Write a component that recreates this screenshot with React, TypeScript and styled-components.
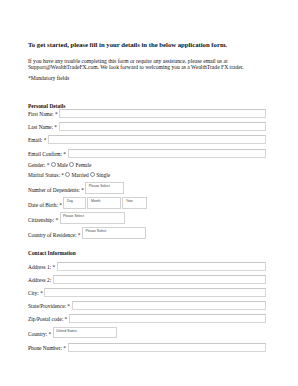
import React from 'react';
import styled, { createGlobalStyle } from 'styled-components';

const GlobalStyle = createGlobalStyle`
  html, body {
    margin: 0;
    padding: 0;
    background: #ffffff;
  }
  body {
    font-family: "Liberation Serif", "Times New Roman", serif;
    color: #111;
  }
`;

const Page = styled.div`
  width: 298px;
  height: 386px;
  padding: 41px 0 0 28px;
  box-sizing: border-box;
  overflow: hidden;
`;

const Title = styled.h1`
  margin: 0;
  font-size: 6.7px;
  line-height: 8px;
  font-weight: bold;
  white-space: nowrap;
`;

const Intro = styled.p`
  margin: 9px 0 0;
  font-size: 5.6px;
  line-height: 6.3px;
  white-space: nowrap;
`;

const Note = styled.p`
  margin: 4px 0 0;
  font-size: 5.6px;
  line-height: 6.3px;
`;

const SectionTitle = styled.h2<{ $top: number }>`
  margin: ${(p) => p.$top}px 0 0;
  font-size: 5.4px;
  line-height: 6px;
  font-weight: bold;
`;

const Form = styled.div`
  width: 238px;
  display: flex;
  flex-direction: column;
`;

const Row = styled.div<{ $gap: number }>`
  display: flex;
  align-items: flex-end;
  margin-top: ${(p) => p.$gap}px;
`;

const Label = styled.span`
  font-size: 5.4px;
  line-height: 6px;
  white-space: nowrap;
  padding-bottom: 1px;
  margin-right: 1.5px;
`;

const TextInput = styled.div`
  flex: 1;
  height: 9px;
  box-sizing: border-box;
  border: 1px solid #d6d6d6;
  border-top-color: #c8c8c8;
  background: #fff;
`;

const SelectBox = styled.div<{ $w: number }>`
  width: ${(p) => p.$w}px;
  height: 11.5px;
  box-sizing: border-box;
  border: 1px solid #d2d2d2;
  background: #fff;
  font-family: "Liberation Sans", Arial, sans-serif;
  font-size: 3.4px;
  line-height: 4px;
  color: #444;
  padding: 1px 0 0 2.5px;
  white-space: nowrap;
`;

const SelectGroup = styled.div`
  display: flex;
  gap: 1px;
`;

const Radio = styled.span`
  display: inline-block;
  width: 3px;
  height: 3px;
  border: 0.5px solid #888;
  border-radius: 50%;
  margin: 0 1px 0 1.5px;
  vertical-align: 0.3px;
`;

const InlineText = styled.span`
  font-size: 5.4px;
  line-height: 6px;
  white-space: nowrap;
`;

export default function App() {
  return (
    <>
      <GlobalStyle />
      <Page>
        <Title>To get started, please fill in your details in the below application form.</Title>
        <Intro>
          If you have any trouble completing this form or require any assistance, please email us at
          <br />
          Support@WealthTradeFX.com. We look forward to welcoming you as a WealthTrade FX trader.
        </Intro>
        <Note>*Mandatory fields</Note>

        <SectionTitle $top={22}>Personal Details</SectionTitle>
        <Form>
          <Row $gap={0}>
            <Label>First Name: *</Label>
            <TextInput />
          </Row>
          <Row $gap={4.3}>
            <Label>Last Name: *</Label>
            <TextInput />
          </Row>
          <Row $gap={4.3}>
            <Label>Email: *</Label>
            <TextInput />
          </Row>
          <Row $gap={4.3}>
            <Label>Email Confirm: *</Label>
            <TextInput />
          </Row>
          <Row $gap={4}>
            <InlineText>
              Gender: *<Radio />Male<Radio />Female
            </InlineText>
          </Row>
          <Row $gap={4}>
            <InlineText>
              Marital Status: *<Radio />Married<Radio />Single
            </InlineText>
          </Row>
          <Row $gap={4}>
            <Label>Number of Dependents: *</Label>
            <SelectBox $w={39}>Please Select</SelectBox>
          </Row>
          <Row $gap={3.5}>
            <Label>Date of Birth: *</Label>
            <SelectGroup>
              <SelectBox $w={23}>Day</SelectBox>
              <SelectBox $w={34}>Month</SelectBox>
              <SelectBox $w={25}>Year</SelectBox>
            </SelectGroup>
          </Row>
          <Row $gap={3.5}>
            <Label>Citizenship: *</Label>
            <SelectBox $w={65}>Please Select</SelectBox>
          </Row>
          <Row $gap={3.5}>
            <Label>Country of Residence: *</Label>
            <SelectBox $w={64}>Please Select</SelectBox>
          </Row>
        </Form>

        <SectionTitle $top={11}>Contact Information</SectionTitle>
        <Form>
          <Row $gap={6}>
            <Label>Address 1: *</Label>
            <TextInput />
          </Row>
          <Row $gap={4}>
            <Label>Address 2:</Label>
            <TextInput />
          </Row>
          <Row $gap={4}>
            <Label>City: *</Label>
            <TextInput />
          </Row>
          <Row $gap={4}>
            <Label>State/Providence: *</Label>
            <TextInput />
          </Row>
          <Row $gap={4}>
            <Label>Zip/Postal code: *</Label>
            <TextInput />
          </Row>
          <Row $gap={4}>
            <Label>Country: *</Label>
            <SelectBox $w={64}>United States</SelectBox>
          </Row>
          <Row $gap={4.5}>
            <Label>Phone Number: *</Label>
            <TextInput />
          </Row>
        </Form>
      </Page>
    </>
  );
}
